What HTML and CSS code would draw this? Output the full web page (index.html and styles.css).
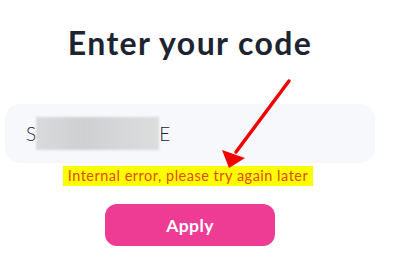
FILE: index.html
```html
<!DOCTYPE html>
<html lang="en">
<head>
    <meta charset="UTF-8">
    <meta name="viewport" content="width=device-width, initial-scale=1.0">
    <title>Enter your code</title>
    <link rel="stylesheet" href="styles.css">
</head>
<body>
    <div class="container">
        <h1 class="title">Enter your code</h1>
        <div class="code-box">
            <span class="code-text">S<span class="blur"></span>E</span>
        </div>
        <p class="error"><span class="error-mark">Internal error, please try again later</span></p>
        <button class="apply">Apply</button>
    </div>

    <svg class="arrow" width="417" height="261" viewBox="0 0 417 261">
        <line x1="289" y1="81" x2="236" y2="152" stroke="#f20000" stroke-width="3.5" stroke-linecap="round"/>
        <polygon points="229,168 222,150 245,158" fill="#f20000"/>
    </svg>
</body>
</html>
```

FILE: styles.css
```css
body {
    font-family: Lato, "Open Sans", sans-serif;
    margin: 0;
    padding: 0;
    background-color: #ffffff;
    position: relative;
}
.container {
    width: 370px;
    margin-left: 5px;
    display: flex;
    flex-direction: column;
    align-items: center;
}
.title {
    margin: 23px 0 0 0;
    font-size: 32px;
    font-weight: 700;
    color: #1b2430;
    letter-spacing: 1.4px;
    line-height: 40px;
}
.code-box {
    align-self: stretch;
    margin-top: 41px;
    height: 59px;
    background-color: #f6f8fb;
    border-radius: 15px;
    display: flex;
    align-items: center;
    padding-left: 21px;
}
.code-text {
    font-size: 19px;
    font-weight: 300;
    color: #1b2430;
    display: flex;
    align-items: center;
}
.blur {
    display: inline-block;
    width: 123px;
    height: 33px;
    background: linear-gradient(90deg, #d9dadb, #cfd0d1 40%, #d6d7d8 70%, #dcdddd);
    filter: blur(1px);
}
.error {
    margin: 3px 0 0 -4px;
    font-size: 14.5px;
    line-height: 20px;
}
.error-mark {
    background-color: #ffff00;
    color: #e2491c;
    padding: 0 5px;
    display: inline-block;
    letter-spacing: 0.5px;
}
.apply {
    margin-top: 18px;
    width: 170px;
    height: 42px;
    border: none;
    border-radius: 12px;
    background-color: #ee3b94;
    color: white;
    font-family: Lato, sans-serif;
    font-weight: 700;
    font-size: 17.5px;
    letter-spacing: 0.4px;
    cursor: pointer;
}
.arrow {
    position: absolute;
    left: 0;
    top: 0;
    pointer-events: none;
}
```
